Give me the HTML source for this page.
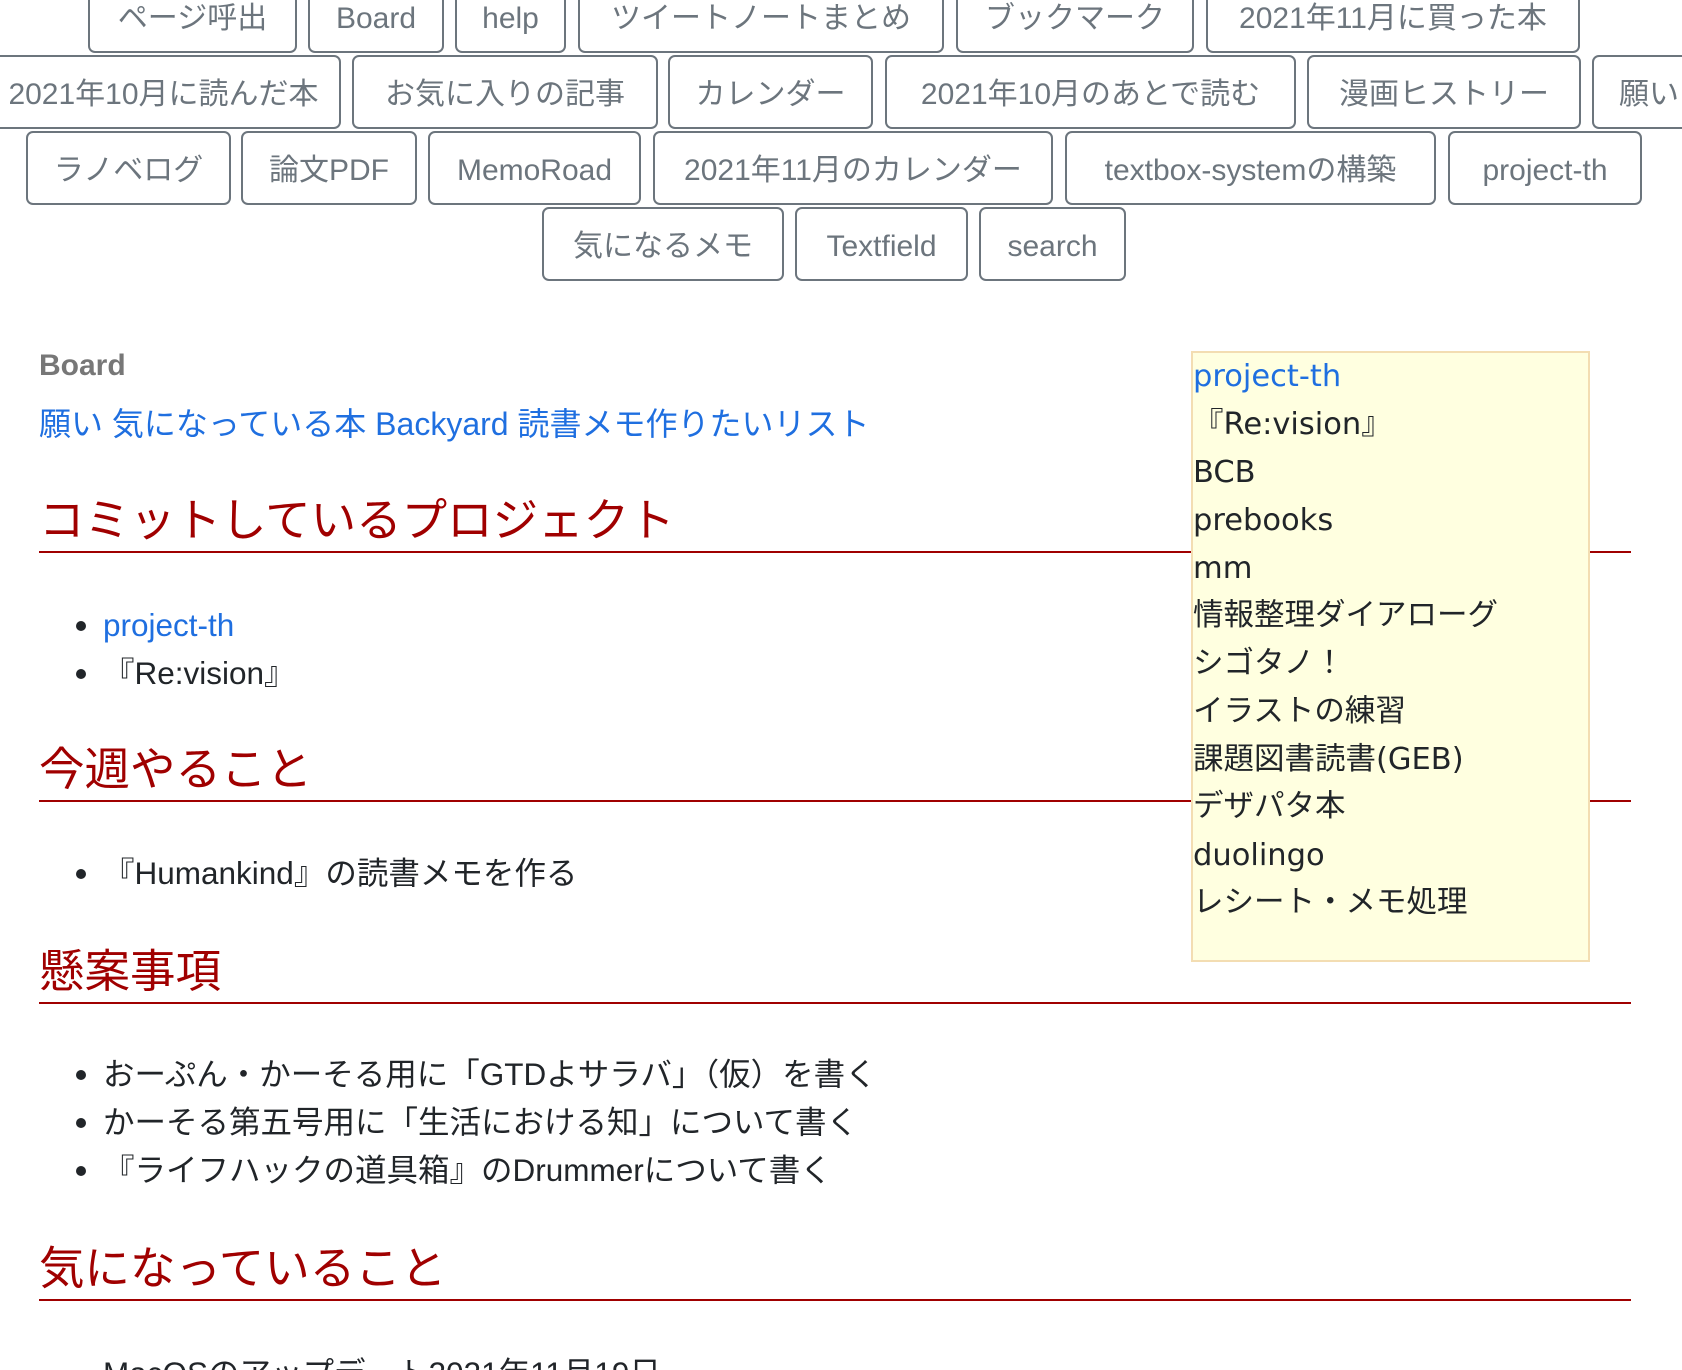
<!DOCTYPE html>
<html><head><meta charset="utf-8">
<style>
html,body{margin:0;padding:0;width:1682px;height:1370px;overflow:hidden;background:#fff;position:relative;
font-family:"Liberation Sans","Noto Sans CJK JP",sans-serif;}
.b{position:absolute;height:74px;box-sizing:border-box;border:2px solid #6c757d;border-radius:7px;
color:#6c757d;font-size:30px;display:flex;align-items:center;justify-content:center;white-space:nowrap;background:#fff;line-height:40px;padding-top:5px;}
.b span{display:block;height:40px;line-height:40px;}
.t{position:absolute;white-space:nowrap;font-size:31.5px;color:#212529;line-height:1;}
.a{color:#1f6fe0 !important;}
.h{position:absolute;left:39px;width:1592px;border-bottom:2px solid #a00000;color:#a00000;font-size:45.5px;line-height:1;}
.dot{position:absolute;width:10px;height:10px;border-radius:5px;background:#212529;}
.side{position:absolute;left:1191px;top:351px;width:399px;height:611px;box-sizing:border-box;background:#ffffe0;border:2px solid #f3ddb2;}
.s{position:absolute;left:1193px;color:#212529;white-space:nowrap;font-family:"DejaVu Sans","Noto Sans CJK JP",sans-serif;line-height:1;font-size:30.5px;}
</style></head><body>
<div class="b" style="left:88px;top:-21px;width:209px"><span>ページ呼出</span></div>
<div class="b" style="left:308px;top:-21px;width:136px"><span>Board</span></div>
<div class="b" style="left:455px;top:-21px;width:111px"><span>help</span></div>
<div class="b" style="left:578px;top:-21px;width:366px"><span>ツイートノートまとめ</span></div>
<div class="b" style="left:956px;top:-21px;width:238px"><span>ブックマーク</span></div>
<div class="b" style="left:1206px;top:-21px;width:374px"><span>2021年11月に買った本</span></div>

<div class="b" style="left:-14px;top:55px;width:355px"><span>2021年10月に読んだ本</span></div>
<div class="b" style="left:352px;top:55px;width:306px"><span>お気に入りの記事</span></div>
<div class="b" style="left:668px;top:55px;width:205px"><span>カレンダー</span></div>
<div class="b" style="left:885px;top:55px;width:411px"><span>2021年10月のあとで読む</span></div>
<div class="b" style="left:1307px;top:55px;width:274px"><span>漫画ヒストリー</span></div>
<div class="b" style="left:1592px;top:55px;width:150px;justify-content:flex-start;padding-left:25px"><span>願い</span></div>

<div class="b" style="left:26px;top:131px;width:205px"><span>ラノベログ</span></div>
<div class="b" style="left:241px;top:131px;width:176px"><span>論文PDF</span></div>
<div class="b" style="left:428px;top:131px;width:213px"><span>MemoRoad</span></div>
<div class="b" style="left:653px;top:131px;width:400px"><span>2021年11月のカレンダー</span></div>
<div class="b" style="left:1065px;top:131px;width:371px"><span>textbox-systemの構築</span></div>
<div class="b" style="left:1448px;top:131px;width:194px"><span>project-th</span></div>

<div class="b" style="left:542px;top:207px;width:242px"><span>気になるメモ</span></div>
<div class="b" style="left:795px;top:207px;width:173px"><span>Textfield</span></div>
<div class="b" style="left:979px;top:207px;width:147px"><span>search</span></div>

<div class="t" style="left:39px;top:351px;color:#777;font-weight:bold;font-size:30px">Board</div>
<div class="t a" style="left:39px;top:408px;font-size:32px">願い 気になっている本 Backyard 読書メモ作りたいリスト</div>

<div class="h" style="top:498px;height:53px">コミットしているプロジェクト</div>
<div class="dot" style="left:76px;top:621px"></div>
<div class="t a" style="left:103px;top:610px">project-th</div>
<div class="dot" style="left:76px;top:669px"></div>
<div class="t" style="left:103px;top:658px">『Re:vision』</div>

<div class="h" style="top:747px;height:53px">今週やること</div>
<div class="dot" style="left:76px;top:869px"></div>
<div class="t" style="left:103px;top:858px">『Humankind』の読書メモを作る</div>

<div class="h" style="top:949px;height:53px">懸案事項</div>
<div class="dot" style="left:76px;top:1070px"></div>
<div class="t" style="left:103px;top:1059px">おーぷん・かーそる用に「GTDよサラバ」（仮）を書く</div>
<div class="dot" style="left:76px;top:1118px"></div>
<div class="t" style="left:103px;top:1107px">かーそる第五号用に「生活における知」について書く</div>
<div class="dot" style="left:76px;top:1166px"></div>
<div class="t" style="left:103px;top:1155px">『ライフハックの道具箱』のDrummerについて書く</div>

<div class="h" style="top:1246px;height:53px">気になっていること</div>
<div class="dot" style="left:76px;top:1374px"></div>
<div class="t" style="left:103px;top:1358px">MacOSのアップデート2021年11月19日</div>

<div class="side"></div>
<div class="s a" style="top:362px">project-th</div>
<div class="s" style="top:410px">『Re:vision』</div>
<div class="s" style="top:458px">BCB</div>
<div class="s" style="top:506px">prebooks</div>
<div class="s" style="top:554px">mm</div>
<div class="s" style="top:601px">情報整理ダイアローグ</div>
<div class="s" style="top:649px">シゴタノ！</div>
<div class="s" style="top:697px">イラストの練習</div>
<div class="s" style="top:745px">課題図書読書(GEB)</div>
<div class="s" style="top:792px">デザパタ本</div>
<div class="s" style="top:841px">duolingo</div>
<div class="s" style="top:888px">レシート・メモ処理</div>
</body></html>
